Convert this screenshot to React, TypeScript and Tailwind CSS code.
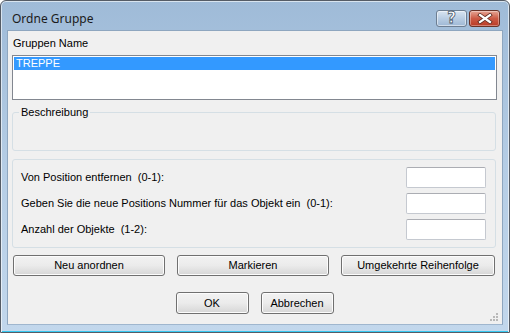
const font = { fontFamily: "Tahoma, 'Liberation Sans', Arial, sans-serif" };

const TextBox = () => (
  <div className="w-[80px] h-[21px] bg-white border border-[#c5c9d0] border-t-[#abadb3] rounded-[2px]" />
);

const Button = ({ label, className }: { label: string; className: string }) => (
  <button
    className={`h-[21px] rounded-[3px] border border-[#707070] bg-gradient-to-b from-[#f2f2f2] via-[#ebebeb] to-[#d6d6d6] text-[11px] text-black shadow-[inset_0_0_0_1px_#fcfcfc] ${className}`}
  >
    {label}
  </button>
);

export default function App() {
  return (
    <div className="w-[510px] h-[333px] bg-white">
      <div
        className="w-[510px] h-[333px] rounded-t-[6px] border border-[#555c66] bg-gradient-to-b from-[#9fbbd8] via-[#b5cde5] to-[#c2d7ec] flex flex-col shadow-[inset_0_0_0_1px_rgba(255,255,255,0.6)]"
        style={font}
      >
        {/* title bar */}
        <div className="h-[29px] flex items-start justify-between pl-[11px] pr-[9px]">
          <span className="mt-[9px] text-[12px] text-[#1b1b1b]" style={{ fontFamily: "'Noto Sans', 'Open Sans', sans-serif" }}>
            Ordne Gruppe
          </span>
          <div className="flex gap-[2px] mt-[9px]">
            <div className="w-[31px] h-[17px] rounded-[3px] border border-[#6d7e92] bg-gradient-to-b from-[#d8e4f1] via-[#b9cde3] to-[#9eb8d5] flex items-center justify-center shadow-[inset_0_0_0_1px_rgba(255,255,255,0.5)]">
              <span className="text-[15px] font-bold leading-none text-white" style={{ WebkitTextStroke: "0.8px #4b5a6b", fontFamily: "'DejaVu Sans', sans-serif" }}>
                ?
              </span>
            </div>
            <div className="w-[31px] h-[17px] rounded-[3px] border border-[#6a3328] bg-gradient-to-b from-[#e5a595] via-[#cc5a45] to-[#b93a25] flex items-center justify-center shadow-[inset_0_0_0_1px_rgba(255,255,255,0.35)]">
              <svg width="16" height="11" viewBox="0 0 16 11">
                <path d="M3 2 L13 9 M13 2 L3 9" stroke="#5b2a20" strokeWidth="3.8" strokeLinecap="square" />
                <path d="M3 2 L13 9 M13 2 L3 9" stroke="#ffffff" strokeWidth="2.2" strokeLinecap="square" />
              </svg>
            </div>
          </div>
        </div>

        {/* client area */}
        <div className="mx-[6px] h-[295px] bg-[#f0f0f0] border border-[#8ea6bf] border-b-[#9fb6ce] flex flex-col px-[4px] text-[11px] text-black relative">
          <div className="mt-[6px] h-[13px] leading-[13px] pl-[1px]">Gruppen Name</div>
          <div className="mt-[5px] h-[45px] w-[485px] bg-white border border-[#828790] p-[1px]">
            <div className="h-[13px] bg-[#3399ff] text-white leading-[13px] pl-[2px]">TREPPE</div>
          </div>

          {/* Beschreibung */}
          <div className="mt-[12px] h-[39px] w-[484px] border border-[#d5dfe5] rounded-[3px] relative">
            <span className="absolute -top-[7px] left-[6px] px-[2px] bg-[#f0f0f0] leading-[13px]">Beschreibung</span>
          </div>

          {/* fields */}
          <div className="mt-[8px] h-[89px] w-[484px] border border-[#d5dfe5] rounded-[3px] pl-[8px] pr-[9px] pt-[7px] flex flex-col gap-[5px]">
            {[
              "Von Position entfernen  (0-1):",
              "Geben Sie die neue Positions Nummer für das Objekt ein  (0-1):",
              "Anzahl der Objekte  (1-2):",
            ].map((l) => (
              <div key={l} className="flex items-center justify-between h-[21px]">
                <span className="whitespace-pre">{l}</span>
                <TextBox />
              </div>
            ))}
          </div>

          <div className="mt-[7px] flex justify-between w-[483px] pl-[1px]">
            <Button label="Neu anordnen" className="w-[152px]" />
            <Button label="Markieren" className="w-[152px]" />
            <Button label="Umgekehrte Reihenfolge" className="w-[154px]" />
          </div>

          <div className="mt-[16px] flex justify-center gap-[12px] pr-[1px]">
            <Button label="OK" className="w-[73px] h-[22px]" />
            <Button label="Abbrechen" className="w-[73px] h-[22px]" />
          </div>

          <svg className="absolute right-[4px] bottom-[3px]" width="8" height="8" viewBox="0 0 8 8">
            {[
              [6, 0], [6, 3], [3, 3], [6, 6], [3, 6], [0, 6],
            ].map(([x, y]) => (
              <rect key={`${x}-${y}`} x={x} y={y} width="2" height="2" fill="#b8b8b8" />
            ))}
          </svg>
        </div>
        <div className="flex-1" />
        <div className="h-[1px] bg-[#36c8f0] mx-[1px]" />
      </div>
    </div>
  );
}
